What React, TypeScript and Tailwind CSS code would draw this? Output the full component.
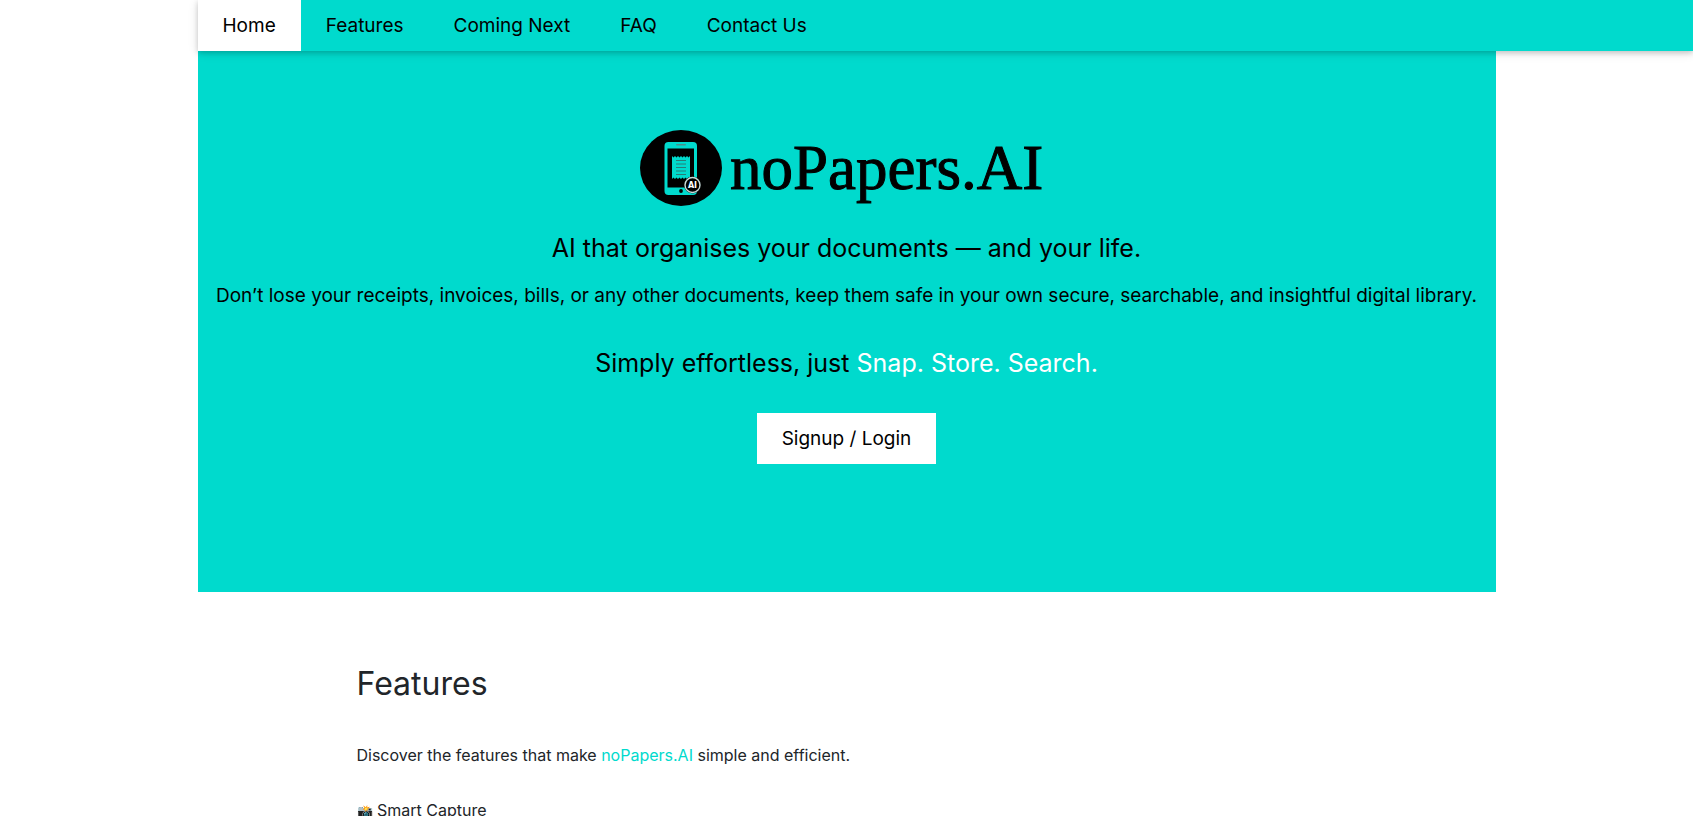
const navItems = [
  { label: "Home", href: "#home", active: true },
  { label: "Features", href: "#features", active: false },
  { label: "Coming Next", href: "#next", active: false },
  { label: "FAQ", href: "#faq", active: false },
  { label: "Contact Us", href: "#contact", active: false },
];

function Emblem() {
  return (
    <svg className="shrink-0" width="82" height="76" viewBox="0 0 82 76" aria-hidden="true">
      <ellipse cx="41" cy="38" rx="41" ry="38" fill="#000" />
      <rect x="24.500" y="12" width="32.500" height="53" rx="4" fill="#00dacd" />
      <rect x="36" y="14" width="10" height="1.6" rx="0.8" fill="#4a8f8b" />
      <rect x="27.500" y="18.500" width="26.500" height="39" fill="#000" />
      <path
        d="M32 26l1.500 1.500 1.500-1.500 1.500 1.500 1.500-1.500 1.500 1.500 1.500-1.500 1.500 1.500 1.500-1.500 1.500 1.500 1.500-1.500 1.500 1.500 1.500-1.500V49l-1.500-1.500-1.500 1.500-1.500-1.500-1.500 1.500-1.500-1.500-1.500 1.500-1.500-1.500-1.500 1.500-1.500-1.500-1.500 1.500-1.500-1.500-1.500 1.500z"
        fill="#00dacd"
      />
      <path d="M36 30.500h10M36 34h10M36 37.500h10M36 41h10M36 44.500h10" stroke="#277d78" strokeWidth="1" />
      <circle cx="41" cy="61" r="1.900" fill="#000" />
      <circle cx="52.500" cy="55" r="8.500" fill="#000" />
      <circle cx="52.500" cy="55" r="7.500" fill="none" stroke="#c9dcdb" strokeWidth="1.400" />
      <text x="52.500" y="57.800" textAnchor="middle" fontSize="8" fontWeight="700" fontFamily="DejaVu Sans, sans-serif" fill="#fff">
        AI
      </text>
    </svg>
  );
}

export default function App() {
  return (
    <div className="min-h-screen bg-white font-['Inter',sans-serif] text-black">
      <nav className="relative ml-[max(0px,calc((100%-1298px)/2))] flex bg-[#00dacd] text-[19px] leading-[27px] shadow-[0_2px_5px_0_rgba(0,0,0,0.16),0_2px_10px_0_rgba(0,0,0,0.12)]">
        {navItems.map((item) => (
          <a key={item.label} href={item.href} className={item.active ? "bg-white px-[25px] py-3" : "px-[25px] py-3"}>
            {item.label}
          </a>
        ))}
      </nav>

      <header id="home" className="mx-auto max-w-[1298px] bg-[#00dacd] px-4 pt-[79px] pb-32 text-center">
        <h1 className="mx-auto flex max-w-[413px] items-center gap-2">
          <Emblem />
          <span className="font-['Liberation_Serif',serif] text-[63px] leading-[76px] [-webkit-text-stroke:1px_#000]">
            noPapers.AI
          </span>
        </h1>
        <p className="mt-6 text-[25px] leading-9">AI that organises your documents — and your life.</p>
        <p className="mt-4 text-[19px] leading-[27px]">
          Don’t lose your receipts, invoices, bills, or any other documents, keep them safe in your own secure,
          searchable, and insightful digital library.
        </p>
        <p className="mt-9 text-[25px] leading-9">
          Simply effortless, just <span className="text-white">Snap. Store. Search.</span>
        </p>
        <button type="button" className="mt-8 bg-white px-[25px] py-3 text-[19px] leading-[27px]">
          Signup / Login
        </button>
      </header>

      <main id="features" className="mx-auto max-w-[980px] pt-16 text-[#212529]">
        <h2 className="text-[32px] leading-[56px]">Features</h2>
        <p className="mt-[31px] text-[16px] leading-6">
          Discover the features that make <span className="text-[#00dacd]">noPapers.AI</span> simple and efficient.
        </p>
        <h3 className="mt-[31px] text-[16px] leading-6">
          <span className="text-[13px]">📸</span> Smart Capture
        </h3>
      </main>
    </div>
  );
}
